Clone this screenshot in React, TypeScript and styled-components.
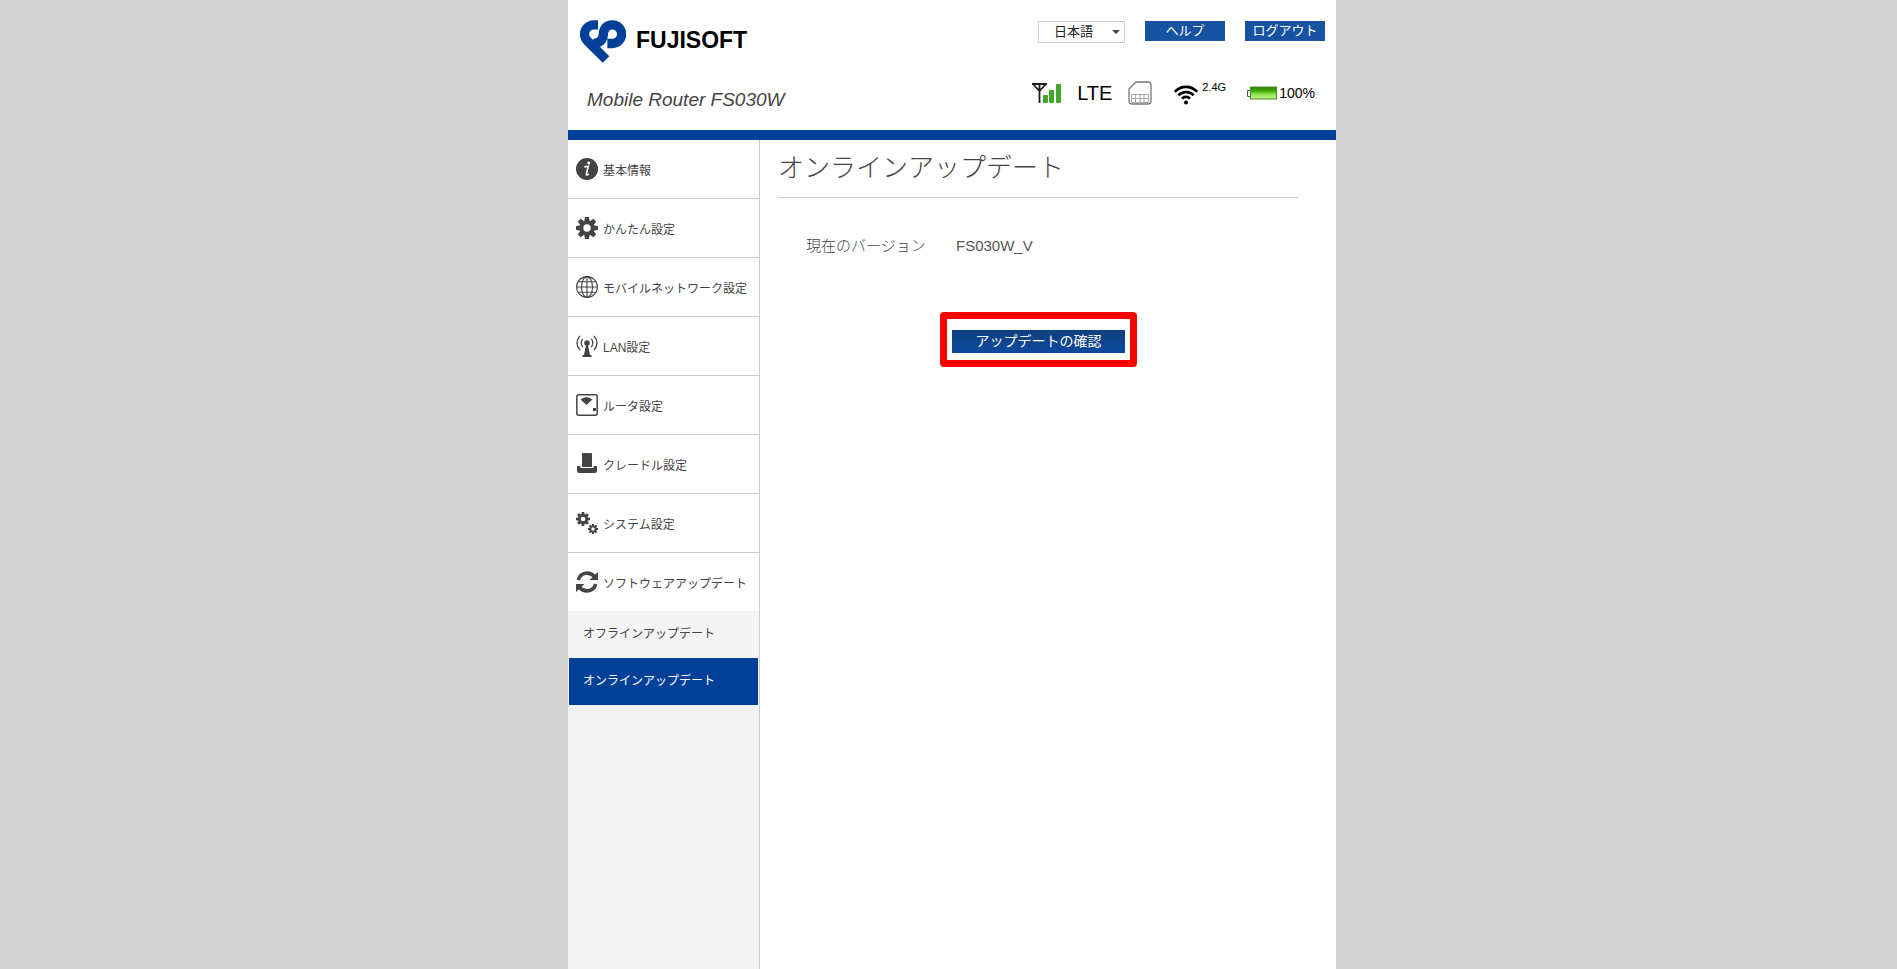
import React, { useState } from "react";
import styled, { createGlobalStyle } from "styled-components";

const BLUE = "#004098";
const LINE = "#cccccc";
const INK = "#444444";

const GlobalStyle = createGlobalStyle`
  *, *::before, *::after { box-sizing: border-box; }
  body {
    margin: 0;
    background: #d3d3d3;
    color: ${INK};
    font-family: "Liberation Sans", "Noto Sans CJK JP", sans-serif;
    font-size: 12px;
  }
  button, select { font-family: inherit; }
`;

const Page = styled.div`
  display: flex;
  justify-content: center;
  min-height: 100vh;
  padding-left: 7px;
`;

const Shell = styled.div`
  display: flex;
  flex-direction: column;
  width: 100%;
  max-width: 768px;
  background: #fff;
`;

const Header = styled.header`
  display: flex;
  justify-content: space-between;
  min-height: 140px;
  padding: 20px 11px 0 12px;
  border-bottom: 10px solid ${BLUE};
`;

const Brand = styled.div`
  display: flex;
  flex-direction: column;
  gap: 25px;
`;

const LogoLink = styled.a`
  display: flex;
  align-items: center;
  gap: 10px;
  height: 43px;
  color: #000;
  font-size: 23px;
  font-weight: 700;
  line-height: 24px;
  text-decoration: none;

  span { padding-bottom: 4px; }
`;

const Model = styled.div`
  padding-left: 7px;
  font-size: 19px;
  font-style: italic;
  line-height: 24px;
`;

const Tools = styled.div`
  display: flex;
  flex-direction: column;
  align-items: flex-end;
  gap: 34px;
  padding-top: 1px;
`;

const ToolRow = styled.div`
  display: flex;
  align-items: flex-start;
  gap: 20px;
`;

const SelectBox = styled.label`
  position: relative;
  display: block;

  svg {
    position: absolute;
    right: 5px;
    top: 9px;
    pointer-events: none;
  }
`;

const LanguageSelect = styled.select`
  display: block;
  width: 87px;
  height: 22px;
  padding: 0 15px;
  border: 1px solid ${LINE};
  border-radius: 0;
  background: #fff;
  color: #222;
  font-size: 13px;
  line-height: 20px;
  appearance: none;
`;

const ToolButton = styled.button`
  width: 80px;
  height: 20px;
  padding: 0;
  border: 0;
  background: #1653a2;
  color: #fff;
  font-size: 13px;
  line-height: 20px;
`;

const StatusRow = styled.div`
  display: flex;
  align-items: center;
  gap: 16px;
  height: 32px;
  padding-right: 10px;
  color: #000;
`;

const Network = styled.span`
  font-size: 20px;
  line-height: 24px;
`;

const Wifi = styled.span`
  display: flex;
  align-items: flex-start;
  gap: 4px;
  margin: 0 4px 0 6px;
  font-size: 11px;
  line-height: 12px;

  span { height: 24px; }
  svg { margin-top: 4px; }
`;

const Battery = styled.span`
  display: flex;
  align-items: center;
  gap: 2px;
  font-size: 14px;
  line-height: 16px;
`;

const Body = styled.div`
  display: flex;
  flex: 1;
`;

const Sidebar = styled.nav`
  flex: 0 0 192px;
  border-right: 1px solid ${LINE};
  background: #f2f2f2;
`;

const List = styled.ul`
  margin: 0;
  padding: 0;
  list-style: none;
`;

const MenuItem = styled.li`
  background: #fff;

  & + & { border-top: 1px solid ${LINE}; }
`;

const MenuLink = styled.a`
  display: flex;
  align-items: center;
  gap: 5px;
  height: 58px;
  padding-left: 8px;
  color: ${INK};
  line-height: 16px;
  text-decoration: none;
  white-space: nowrap;

  svg { flex: none; }
  span { padding-top: 4px; }
`;

const SubLink = styled.a<{ $active?: boolean }>`
  display: block;
  height: 47px;
  margin: 0 1px;
  padding-left: 14px;
  background: ${({ $active }) => ($active ? BLUE : "#f4f4f4")};
  color: ${({ $active }) => ($active ? "#fff" : INK)};
  line-height: 47px;
  text-decoration: none;
`;

const SubList = styled(List)`
  background: #f4f4f4;
`;

const Main = styled.main`
  flex: 1;
  padding: 0 37px 0 18px;
`;

const Title = styled.h1`
  margin: 0;
  height: 58px;
  border-bottom: 1px solid ${LINE};
  color: #444;
  font-size: 26px;
  font-weight: 300;
  line-height: 56px;
`;

const VersionInfo = styled.dl`
  display: grid;
  grid-template-columns: 150px 1fr;
  margin: 38px 0 0;
  padding-left: 28px;
  color: #555;
  font-size: 15px;
  line-height: 20px;

  dt {
    color: #444;
    font-weight: 300;
  }
  dd { margin: 0; }
`;

const Action = styled.div`
  display: flex;
  justify-content: center;
  margin-top: 56px;
`;

const Highlight = styled.div`
  padding: 11px 5px 7px;
  border: 7px solid #f00;
  border-radius: 4px;
`;

const UpdateButton = styled.button`
  display: block;
  width: 173px;
  height: 23px;
  padding: 0 0 2px;
  border: 0;
  background: linear-gradient(#0f3f7e, #0c4a9e);
  color: #fff;
  font-size: 14px;
  line-height: 20px;
`;

const Logo = () => (
  <svg width="46" height="43" viewBox="0 0 138 128" aria-hidden="true">
    <g fill="none" stroke={BLUE} strokeWidth="28">
      <path d="M54 14H42A28 28 0 0 0 22 62L78 118" />
      <path d="M40 70C58 70 69 60 70 42C71 24 80 14 97 14A28 28 0 0 1 97 70H82" />
    </g>
  </svg>
);

const Signal = () => (
  <svg width="29" height="21" viewBox="0 0 29 21" role="img" aria-label="signal">
    <path d="M0 1H15M1 1L7.500 8L14 1M7.500 1V20" fill="none" stroke="#231815" strokeWidth="1.800" />
    <g fill="#45a72d">
      <rect x="11" y="12" width="5" height="8" rx="1" />
      <rect x="17" y="7" width="5" height="13" rx="1" />
      <rect x="24" y="1" width="5" height="19" rx="1" />
    </g>
  </svg>
);

const Sim = () => (
  <svg width="24" height="24" viewBox="0 0 24 24" role="img" aria-label="SIM">
    <path d="M8 1H20Q23 1 23 4V20Q23 23 20 23H4Q1 23 1 20V8Z" fill="#fff" stroke="#777" strokeWidth="1.300" />
    <path d="M3.500 13.500H20.500V21.500H3.500ZM3.500 17.500H20.500M7.500 13.500V21.500M12 13.500V17.500M16 13.500V21.500M12 17.500V21.500" fill="none" stroke="#aaa" />
  </svg>
);

const WifiIcon = () => (
  <svg width="24" height="20" viewBox="0 0 24 20" role="img" aria-label="Wi-Fi">
    <g fill="none" stroke="#000" strokeWidth="2.700">
      <path d="M.8 6.800C7 .200 17 .200 23.200 6.800" />
      <path d="M4.400 10.300C8.600 5.900 15.400 5.900 19.600 10.300" />
      <path d="M8 13.600C10.300 11.300 13.700 11.300 16 13.600" />
    </g>
    <circle cx="12" cy="17.500" r="2" />
  </svg>
);

const BatteryIcon = () => (
  <svg width="31" height="14" viewBox="0 0 31 14" role="img" aria-label="battery">
    <defs>
      <linearGradient id="charge" x1="0" y1="0" x2="0" y2="1">
        <stop offset="0" stopColor="#2c7d05" />
        <stop offset=".350" stopColor="#3fae0a" />
        <stop offset=".650" stopColor="#9be65a" />
        <stop offset="1" stopColor="#b6f57c" />
      </linearGradient>
    </defs>
    <path d="M4 4.500H1.500V10.500H4" fill="#fff" stroke="#555" />
    <rect x="4.500" y="1" width="26" height="12" fill="url(#charge)" stroke="#4c8a2a" />
  </svg>
);

const gearAngles = [0, 45, 90, 135];

const Gear = ({ cx, cy, r }: { cx: number; cy: number; r: number }) => (
  <g transform={`translate(${cx} ${cy}) scale(${r / 11})`}>
    {gearAngles.map((a) => (
      <path key={a} d="M-2 -11H2L2.800 -6V6L2 11H-2L-2.800 6V-6Z" transform={`rotate(${a})`} />
    ))}
    <circle r="7.600" />
    <circle r="3.700" fill="#fff" />
  </g>
);

const Icon = ({ children }: { children: React.ReactNode }) => (
  <svg width="22" height="22" viewBox="0 0 22 22" fill={INK} aria-hidden="true">
    {children}
  </svg>
);

const InfoIcon = () => (
  <Icon>
    <circle cx="11" cy="11" r="11" />
    <circle cx="12.800" cy="4.900" r="1.500" fill="#fff" />
    <path d="M8.300 8.900L12.300 8.200L10.300 16.200Q10 18 12.800 16" fill="none" stroke="#fff" strokeWidth="1.600" />
  </Icon>
);

const GlobeIcon = () => (
  <Icon>
    <g fill="none" stroke={INK} strokeWidth="1.100">
      <circle cx="11" cy="11" r="10.400" />
      <ellipse cx="11" cy="11" rx="5.500" ry="10.400" />
      <path d="M11 .6V21.400M.6 11H21.400M2.200 5.700H19.800M2.200 16.300H19.800" />
    </g>
  </Icon>
);

const AntennaIcon = () => (
  <Icon>
    <circle cx="11" cy="8" r="2.800" />
    <path d="M10.200 9H11.800L14 20H15.500V22H6.500V20H8Z" />
    <g fill="none" stroke={INK} strokeWidth="1.300">
      <path d="M6.700 3.800Q3.700 7.800 6.700 12.200M4 .800Q-2 7.800 4 15.200M15.300 3.800Q18.300 7.800 15.300 12.200M18 .800Q24 7.800 18 15.200" />
    </g>
  </Icon>
);

const RouterIcon = () => (
  <Icon>
    <rect x=".8" y=".8" width="20.400" height="20.400" rx="2" fill="none" stroke={INK} strokeWidth="1.500" />
    <path d="M4.500 5.500Q10.500 .5 16.500 5.500L10.500 11Z" />
    <rect x="17" y="14" width="3" height="3" />
  </Icon>
);

const CradleIcon = () => (
  <Icon>
    <path d="M6 1Q6 0 7 0H15Q16 0 16 1V14H6Z" />
    <path d="M1 14Q1 13 2 13H4.500V15H17.500V13H20Q21 13 21 14V18Q21 20 19 20H3Q1 20 1 18Z" />
  </Icon>
);

const RefreshIcon = () => (
  <Icon>
    <g fill="none" stroke={INK} strokeWidth="3.600">
      <path d="M2.300 9C4.500 1 13.500 .2 18.500 5.500" />
      <path d="M19.700 13C17.500 21 8.500 21.800 3.500 16.500" />
    </g>
    <path d="M22 1V9H13.500Z" />
    <path d="M0 21V13H8.500Z" />
  </Icon>
);

const menu = [
  { label: "基本情報", icon: <InfoIcon /> },
  { label: "かんたん設定", icon: <Icon><Gear cx={11} cy={11} r={11} /></Icon> },
  { label: "モバイルネットワーク設定", icon: <GlobeIcon /> },
  { label: "LAN設定", icon: <AntennaIcon /> },
  { label: "ルータ設定", icon: <RouterIcon /> },
  { label: "クレードル設定", icon: <CradleIcon /> },
  {
    label: "システム設定",
    icon: (
      <Icon>
        <Gear cx={7} cy={7} r={7} />
        <Gear cx={17} cy={17} r={5} />
      </Icon>
    ),
  },
  {
    label: "ソフトウェアアップデート",
    icon: <RefreshIcon />,
    children: ["オフラインアップデート", "オンラインアップデート"],
  },
];

export default function App() {
  const [language, setLanguage] = useState("ja");
  const [active, setActive] = useState("オンラインアップデート");

  return (
    <>
      <GlobalStyle />
      <Page>
        <Shell>
          <Header>
            <Brand>
              <LogoLink href="#">
                <Logo />
                <span>FUJISOFT</span>
              </LogoLink>
              <Model>Mobile Router FS030W</Model>
            </Brand>
            <Tools>
              <ToolRow>
                <SelectBox>
                  <LanguageSelect
                    aria-label="言語"
                    value={language}
                    onChange={(e) => setLanguage(e.target.value)}
                  >
                    <option value="ja">日本語</option>
                  </LanguageSelect>
                  <svg width="8" height="4" viewBox="0 0 8 4" aria-hidden="true">
                    <path d="M0 0H8L4 4Z" fill={INK} />
                  </svg>
                </SelectBox>
                <ToolButton type="button">ヘルプ</ToolButton>
                <ToolButton type="button">ログアウト</ToolButton>
              </ToolRow>
              <StatusRow>
                <Signal />
                <Network>LTE</Network>
                <Sim />
                <Wifi>
                  <WifiIcon />
                  <span>2.4G</span>
                </Wifi>
                <Battery>
                  <BatteryIcon />
                  100%
                </Battery>
              </StatusRow>
            </Tools>
          </Header>
          <Body>
            <Sidebar>
              <List>
                {menu.map(({ label, icon, children }) => (
                  <MenuItem key={label}>
                    <MenuLink href="#">
                      {icon}
                      <span>{label}</span>
                    </MenuLink>
                    {children && (
                      <SubList>
                        {children.map((name) => (
                          <li key={name}>
                            <SubLink href="#" $active={name === active} onClick={() => setActive(name)}>
                              {name}
                            </SubLink>
                          </li>
                        ))}
                      </SubList>
                    )}
                  </MenuItem>
                ))}
              </List>
            </Sidebar>
            <Main>
              <Title>オンラインアップデート</Title>
              <VersionInfo>
                <dt>現在のバージョン</dt>
                <dd>FS030W_V</dd>
              </VersionInfo>
              <Action>
                <Highlight>
                  <UpdateButton type="button">アップデートの確認</UpdateButton>
                </Highlight>
              </Action>
            </Main>
          </Body>
        </Shell>
      </Page>
    </>
  );
}
